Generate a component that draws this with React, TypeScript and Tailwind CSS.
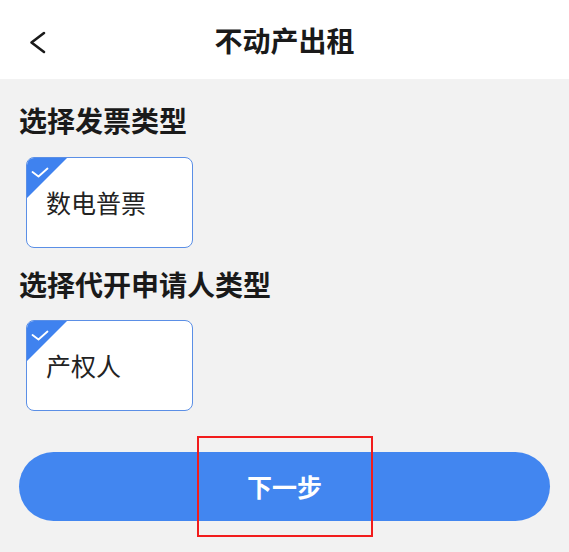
const font = { fontFamily: '"Noto Sans CJK SC", "Noto Sans", sans-serif' };

function OptionCard({ label }: { label: string }) {
  return (
    <div className="relative w-[167px] h-[91px] rounded-[8px] border-[1.5px] border-[#5b8fe6] bg-white overflow-hidden flex items-center pl-[19px]">
      <svg className="absolute left-0 top-0" width="40" height="40" viewBox="0 0 40 40">
        <polygon points="0,0 40,0 0,40" fill="#3f82ef" />
        <polyline
          points="5.5,14 11.5,18.5 20.5,10.5"
          fill="none"
          stroke="#ffffff"
          strokeWidth="1.8"
          strokeLinecap="round"
          strokeLinejoin="round"
        />
      </svg>
      <span className="text-[25px] leading-[25px] text-[#222222]">{label}</span>
    </div>
  );
}

export default function App() {
  return (
    <div className="relative w-[569px] h-[552px] bg-[#f2f2f2] overflow-hidden" style={font}>
      <header className="relative h-[79px] bg-white flex items-center justify-center">
        <button type="button" className="absolute left-[28px] top-[30px]" aria-label="返回">
          <svg width="20" height="26" viewBox="0 0 20 26">
            <polyline
              points="16,3 3.5,12.5 16,22"
              fill="none"
              stroke="#1a1a1a"
              strokeWidth="2.6"
              strokeLinecap="round"
              strokeLinejoin="round"
            />
          </svg>
        </button>
        <h1 className="text-[28px] leading-[28px] font-bold text-[#1a1a1a] mt-[1px]">不动产出租</h1>
      </header>

      <main className="px-[19px] pt-[27px] flex flex-col">
        <h2 className="text-[28px] leading-[28px] font-bold text-[#1a1a1a]">选择发票类型</h2>
        <div className="mt-[23px] pl-[7px]">
          <OptionCard label="数电普票" />
        </div>

        <h2 className="mt-[22px] text-[28px] leading-[28px] font-bold text-[#1a1a1a]">选择代开申请人类型</h2>
        <div className="mt-[22px] pl-[7px]">
          <OptionCard label="产权人" />
        </div>

        <button
          type="button"
          className="mt-[41px] h-[69px] w-full rounded-full bg-[#4286f0] text-white text-[25px] font-bold flex items-center justify-center"
        >
          下一步
        </button>
      </main>

      <div className="absolute left-[197px] top-[436px] w-[176px] h-[101px] border-2 border-[#f21c1c] pointer-events-none" />
    </div>
  );
}
